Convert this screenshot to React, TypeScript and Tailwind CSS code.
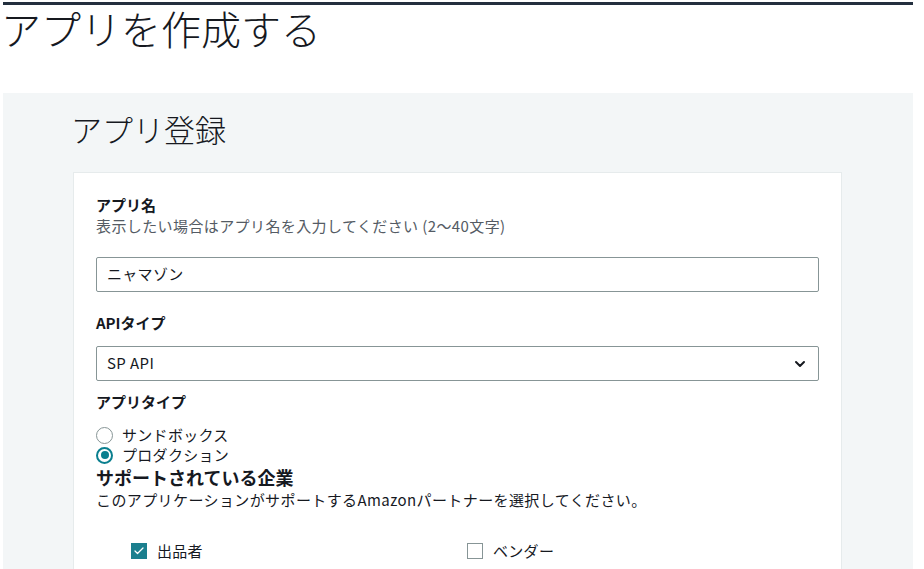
import { ChevronDown, Check } from "lucide-react";

const font = {
  fontFamily: '"Noto Sans CJK JP", "Noto Sans", sans-serif',
};

const Radio = ({ checked, label }: { checked?: boolean; label: string }) => (
  <label className="flex h-5 items-center gap-[9px]">
    <span
      className={
        checked
          ? "flex h-[17px] w-[17px] items-center justify-center rounded-full border-2 border-[#0a7f8f] bg-white"
          : "h-[17px] w-[17px] rounded-full border border-[#879596] bg-white"
      }
    >
      {checked && <span className="h-2 w-2 rounded-full bg-[#0a7f8f]" />}
    </span>
    <span className="text-[15px] tracking-[0.3px] text-[#16191f]">{label}</span>
  </label>
);

const CheckBox = ({ checked, label }: { checked?: boolean; label: string }) => (
  <label className="flex items-center gap-[10px]">
    {checked ? (
      <span className="flex h-4 w-4 items-center justify-center bg-[#1b7f8e]">
        <Check className="h-3 w-3 text-white" strokeWidth={2.5} />
      </span>
    ) : (
      <span className="h-4 w-4 border border-[#879596] bg-white" />
    )}
    <span className="text-[15px] tracking-[0.3px] text-[#16191f]">{label}</span>
  </label>
);

export default function App() {
  return (
    <div className="h-[569px] w-[924px] overflow-hidden bg-white" style={font}>
      <div className="ml-[3px] mt-[2px] h-[3px] w-[910px] bg-[#232f3e]" />
      <h1 className="ml-[1px] h-[88px] pt-[1px] text-[40px] font-light leading-[44px] text-[#16191f]">
        アプリを作成する
      </h1>
      <div className="ml-[3px] h-[476px] w-[910px] bg-[#f3f6f7] pl-[68px] pr-[71px] pt-[16px]">
        <h2 className="h-[63px] text-[31px] font-light leading-[40px] text-[#16191f]">
          アプリ登録
        </h2>
        <div className="ml-[2px] h-[400px] border border-[#e6ebec] bg-white px-[22px] pt-[22px]">
          <div className="text-[15px] font-bold leading-[20px] text-[#16191f]">アプリ名</div>
          <div className="text-[15px] leading-[21px] tracking-[0.4px] text-[#545b64]">
            表示したい場合はアプリ名を入力してください (2～40文字)
          </div>
          <div className="mt-[21px] flex h-[35px] items-center rounded-[2px] border border-[#879596] px-[10px] text-[15px] tracking-[0.3px] text-[#16191f]">
            ニャマゾン
          </div>
          <div className="mt-[21px] text-[15px] font-bold leading-[20px] text-[#16191f]">APIタイプ</div>
          <div className="mt-[13px] flex h-[35px] items-center justify-between rounded-[2px] border border-[#879596] px-[10px] text-[15px] tracking-[0.4px] text-[#16191f]">
            <span>SP API</span>
            <ChevronDown className="h-4 w-4 text-[#16191f]" strokeWidth={3} />
          </div>
          <div className="mt-[11px] text-[15px] font-bold leading-[20px] text-[#16191f]">アプリタイプ</div>
          <div className="mt-[13px] flex flex-col">
            <Radio label="サンドボックス" />
            <Radio checked label="プロダクション" />
          </div>
          <div className="text-[18px] font-bold leading-[24px] text-[#16191f]">
            サポートされている企業
          </div>
          <div className="text-[15px] leading-[22px] tracking-[0.4px] text-[#16191f]">
            このアプリケーションがサポートするAmazonパートナーを選択してください。
          </div>
          <div className="mt-[29px] grid grid-cols-[336px_1fr] pl-[35px]">
            <CheckBox checked label="出品者" />
            <CheckBox label="ベンダー" />
          </div>
        </div>
      </div>
    </div>
  );
}
